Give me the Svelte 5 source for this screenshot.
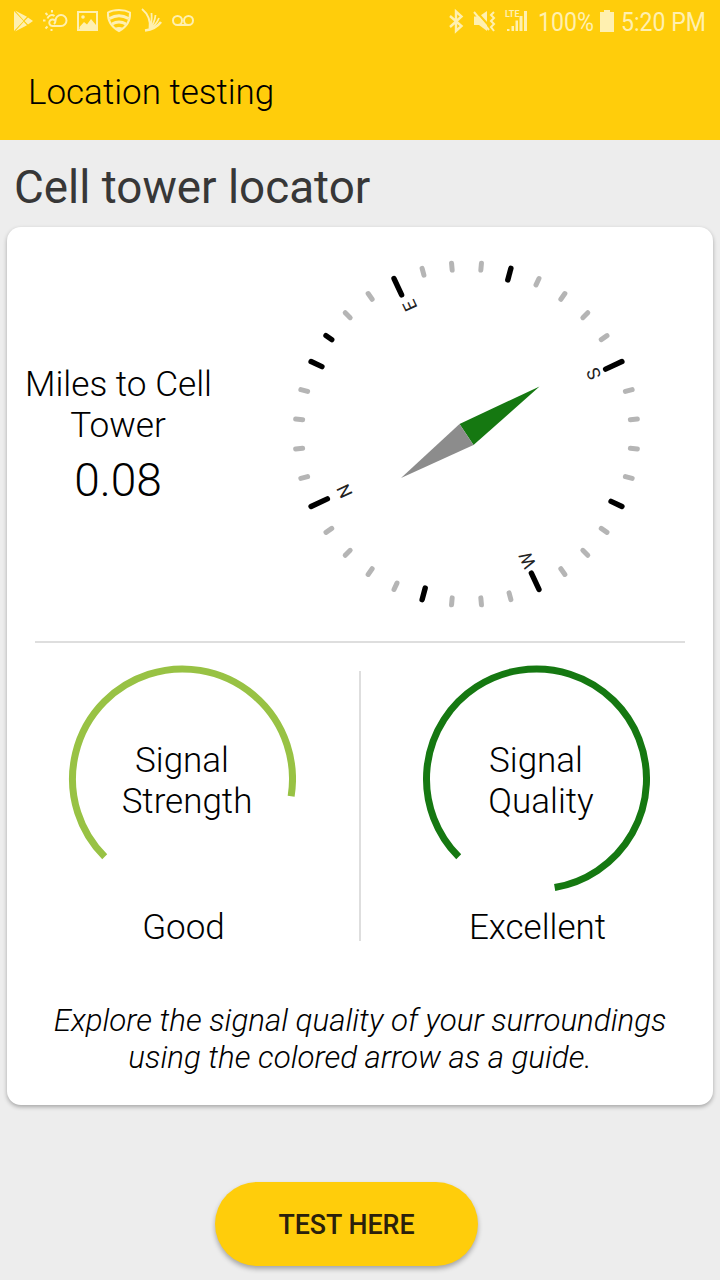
<script>
  // the phone is turned, so every letter on the dial shares one rotation
  const heading = -115;

  const cardinals = [
    { label: 'S', x: 127.2, y: -60 },
    { label: 'W', x: 60.8, y: 126.3 },
    { label: 'N', x: -122, y: 57.3 },
    { label: 'E', x: -56.7, y: -128.3 }
  ];

  const medium = [25, 105, 205, 285];
  const long = [65, 155, 245, 335];

  const point = (angle, r) => {
    const a = (angle * Math.PI) / 180;
    return [r * Math.cos(a), r * Math.sin(a)];
  };

  const ticks = [];
  for (let angle = 5; angle < 365; angle += 10) {
    const isLong = long.includes(angle);
    const isMedium = medium.includes(angle);
    const inner = isLong ? 153.5 : isMedium ? 159.5 : 164.5;
    const [x1, y1] = point(angle, inner);
    const [x2, y2] = point(angle, 171.5);
    ticks.push({ x1, y1, x2, y2, dark: isLong || isMedium || angle === 215 });
  }

  const arc = (start, end) => {
    const [x1, y1] = point(start, 110);
    const [x2, y2] = point(end, 110);
    return `M${x1} ${y1}A110 110 0 1 1 ${x2} ${y2}`;
  };

  const gauges = [
    { top: 'Signal', bottom: 'Strength', value: 'Good', color: '#98c244', path: arc(135, 369) },
    { top: 'Signal', bottom: 'Quality', value: 'Excellent', color: '#157811', path: arc(135, 440.5) }
  ];
</script>

<div class="screen">
  <header>
    <div class="status">
      <svg width="220" height="44" viewBox="0 0 220 44" fill="#fff0b0">
        <path d="M14 11l9.500 10L14 31z" />
        <path d="M15 10.500l12 6.300-3.300 3.400zM15 31.500l12-6.300-3.300-3.400zM28 17.500l5 3.500-5 3.500-3.500-3.500z" />
        <g fill="none" stroke="#fff0b0" stroke-width="2">
          <path d="M52.500 26H61a5.500 5.500 0 1 0-5.500-5.500c0 1.500-.5 2.500-1.500 3.500M52.500 26a3.300 3.300 0 1 1 2.500-5.500M47.500 18.500a4.500 4.500 0 0 1 7-2.500" />
          <path d="M52 10v2.500M45.500 13l2 2M43 20.500h2.500M45.500 28.500l2-2M51.500 29v2" />
          <path d="M78 12h19v18H78z" />
          <path d="M119 10c4.500 0 8 .8 11 2.500.5 8.500-3.500 14.500-11 18.500-7.500-4-11.500-10-11-18.500 3-1.700 6.500-2.500 11-2.500z" />
          <path d="M109.500 18.500c6-3.500 13-3.500 19 0M112 24c4.500-2.500 9.500-2.500 14 0" stroke-width="3" />
        </g>
        <path d="M79.500 27l4.500-5 3 2.500 4-5.500 5 6v5H79.500zM115 28c2.500-1.300 5.500-1.300 8 0l-4 3z" />
        <circle cx="83" cy="17" r="1.800" />
        <g fill="none" stroke="#fff0b0" stroke-width="1.800">
          <path d="M142 9c6 5 9 11 7.500 20M151.500 13c.5 6 0 11-2 16M155.500 15c-.5 5-2.500 10-6 14M159 18c-2 5-5 8.500-9.500 11" />
          <path d="M161 22c-3 4-8 7.500-16 8.500" stroke-width="2.600" />
        </g>
        <g fill="none" stroke="#fff0b0" stroke-width="2">
          <circle cx="177.500" cy="20.500" r="4.500" />
          <circle cx="188.500" cy="20.500" r="4.500" />
          <path d="M177.500 25h11" />
        </g>
      </svg>
      <svg width="274" height="44" viewBox="446 0 274 44" fill="#fff0b0">
        <path d="M450 16l11.500 10-5.500 5V11.500l5.500 5L450 27" fill="none" stroke="#fff0b0" stroke-width="2.400" />
        <path d="M474 16.500h5l8-5.500v20l-8-6h-5z" />
        <path d="M475.500 10.500l15 17" stroke="#ffcd0b" stroke-width="2" />
        <path d="M474 12l15 18M494 12l-3 3 3 3-3 3 3 3-3 3 3 4" fill="none" stroke="#fff0b0" stroke-width="2" />
        <path d="M507 31v-2h2.500v2zM511.500 31v-5h2.500v5zM515.500 31v-10.500h2.500V31zM519.500 31V16h3v15zM524 31V11h3v20z" />
        <text x="505" y="16.500" font-size="9" font-weight="700" textLength="14.500" lengthAdjust="spacingAndGlyphs">LTE</text>
        <text x="538" y="31" font-size="26" textLength="56" lengthAdjust="spacingAndGlyphs">100%</text>
        <path d="M604 10h6v2h4v20h-14V12h4z" />
        <text x="621" y="31" font-size="26" textLength="85" lengthAdjust="spacingAndGlyphs">5:20 PM</text>
      </svg>
    </div>
    <div class="title">Location testing</div>
  </header>

  <h1>Cell tower locator</h1>

  <main class="card">
    <section class="locator">
      <div class="distance">
        <p>Miles to Cell<br />Tower</p>
        <strong>0.08</strong>
      </div>
      <svg class="compass" width="350" height="350" viewBox="-175.5 -175 350 350">
        {#each ticks as t}
          <line x1={t.x1} y1={t.y1} x2={t.x2} y2={t.y2} class:dark={t.dark} />
        {/each}
        {#each cardinals as c}
          <text transform="translate({c.x} {c.y}) rotate({heading})" y="6.500">{c.label}</text>
        {/each}
        <path d="M73-47.500L7 11-7-10z" fill="#157811" />
        <path d="M-65.500 44L7 11-7-10z" fill="#8c8c8c" />
      </svg>
    </section>

    <section class="gauges">
      {#each gauges as g}
        <div class="gauge">
          <div class="dial">
            <svg width="228" height="228" viewBox="-114.5 -114 228 228">
              <path d={g.path} fill="none" stroke={g.color} stroke-width="7" />
            </svg>
            <div class="label"><span>{g.top}</span><span class="second">{g.bottom}</span></div>
          </div>
          <div class="value">{g.value}</div>
        </div>
      {/each}
    </section>

    <p class="hint">Explore the signal quality of your surroundings<br />using the colored arrow as a guide.</p>
  </main>

  <button>TEST HERE</button>
</div>

<style>
  :global(body) {
    margin: 0;
    background: #ededed;
  }

  .screen {
    width: 720px;
    height: 1280px;
    overflow: hidden;
    background: #ededed;
    font-family: Roboto, sans-serif;
    color: #000;
  }

  header {
    height: 140px;
    background: #ffcd0b;
  }

  .status {
    display: flex;
    justify-content: space-between;
    height: 44px;
  }

  .title {
    padding-left: 28px;
    font-size: 35px;
    font-weight: 300;
    line-height: 98px;
  }

  h1 {
    margin: 0;
    padding-left: 14px;
    height: 87px;
    font-size: 45.8px;
    font-weight: 400;
    line-height: 95px;
    color: #373737;
  }

  .card {
    width: 706px;
    height: 878px;
    margin: 0 7px;
    border-radius: 14px;
    background: #fff;
    box-shadow: 0 2px 4px rgba(0, 0, 0, 0.3);
  }

  .locator {
    display: flex;
    height: 414px;
    margin: 0 28px;
    border-bottom: 2px solid #dedede;
  }

  .distance {
    width: 186px;
    margin-left: -10px;
    padding-top: 137px;
    text-align: center;
    font-weight: 300;
    white-space: nowrap;
  }

  .distance p {
    margin: 0;
    font-size: 35.2px;
    line-height: 41px;
  }

  .distance strong {
    display: block;
    margin-top: 7px;
    font-size: 46px;
    font-weight: 300;
    line-height: 54px;
  }

  .compass {
    margin: 32px 0 0 80px;
  }

  .compass line {
    stroke: #b5b5b5;
    stroke-width: 5;
    stroke-linecap: round;
  }

  .compass line.dark {
    stroke: #000;
    stroke-width: 5.4;
  }

  .compass text {
    font-size: 18px;
    fill: #222;
    text-anchor: middle;
  }

  .gauges {
    display: flex;
    height: 270px;
    padding-top: 28px;
  }

  .gauge {
    width: 352px;
    font-size: 35px;
    font-weight: 300;
  }

  .gauge + .gauge {
    border-left: 2px solid #dedede;
  }

  .dial {
    position: relative;
    width: 228px;
    height: 228px;
    margin: -6px auto 0 61px;
  }

  .dial svg {
    display: block;
  }

  .label {
    position: absolute;
    inset: 75px 0 auto;
    text-align: center;
    line-height: 41px;
  }

  .label span {
    display: block;
  }

  .label .second {
    padding-left: 10px;
  }

  .value {
    margin-top: 14px;
    width: 353px;
    text-align: center;
    line-height: 41px;
  }

  .hint {
    margin: 61px 0 0;
    text-align: center;
    font-size: 31.3px;
    font-style: italic;
    font-weight: 300;
    line-height: 37px;
  }

  button {
    display: block;
    width: 263px;
    height: 84px;
    margin: 77px 0 0 215px;
    padding: 2px 0 0;
    border: 0;
    border-radius: 42px;
    background: #ffcd0b;
    box-shadow: 0 3px 5px rgba(0, 0, 0, 0.3);
    font-family: inherit;
    font-size: 26.8px;
    font-weight: 500;
    color: #2a200c;
  }
</style>
